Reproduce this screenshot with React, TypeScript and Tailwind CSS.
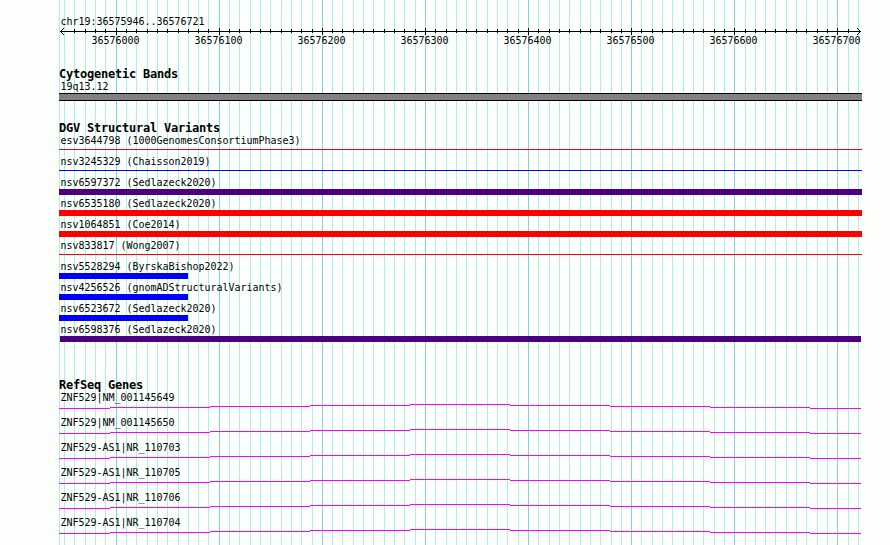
const START = 36575946;
const SCALE = 800 / 776;
const LEFT = 60;

const ticks = Array.from({ length: 78 }, (_, k) => {
  const pos = 36575950 + k * 10;
  return { pos, x: Math.round(LEFT + (pos - START) * SCALE), major: pos % 100 === 0 };
});

type Variant = { label: string; bar: string };

const variants: Variant[] = [
  { label: 'esv3644798 (1000GenomesConsortiumPhase3)', bar: 'mt-[2px] h-px w-[803px] bg-[#f00010]' },
  { label: 'nsv3245329 (Chaisson2019)', bar: 'mt-[2px] h-px w-[803px] bg-[#0000ff]' },
  { label: 'nsv6597372 (Sedlazeck2020)', bar: 'h-[6px] w-[803px] bg-[#4b0082]' },
  { label: 'nsv6535180 (Sedlazeck2020)', bar: 'h-[6px] w-[803px] bg-[#ff0000]' },
  { label: 'nsv1064851 (Coe2014)', bar: 'h-[6px] w-[803px] bg-[#ff0000]' },
  { label: 'nsv833817 (Wong2007)', bar: 'mt-[2px] h-px w-[803px] bg-[#ff0000]' },
  { label: 'nsv5528294 (ByrskaBishop2022)', bar: 'h-[6px] w-[129px] bg-[#0000ff]' },
  { label: 'nsv4256526 (gnomADStructuralVariants)', bar: 'h-[6px] w-[129px] bg-[#0000ff]' },
  { label: 'nsv6523672 (Sedlazeck2020)', bar: 'h-[6px] w-[129px] bg-[#0000ff]' },
  { label: 'nsv6598376 (Sedlazeck2020)', bar: 'ml-px h-[6px] w-[801px] bg-[#4b0082]' },
];

const genes = [
  'ZNF529|NM_001145649',
  'ZNF529|NM_001145650',
  'ZNF529-AS1|NR_110703',
  'ZNF529-AS1|NR_110705',
  'ZNF529-AS1|NR_110706',
  'ZNF529-AS1|NR_110704',
];

function Grid() {
  return (
    <svg className="absolute inset-0" width="890" height="545" shapeRendering="crispEdges">
      <rect x="59" y="0" width="1" height="545" fill="#afeeee" />
      {ticks.map((t) => (
        <rect key={t.pos} x={t.x} y="0" width="1" height="545" fill={t.major ? '#87ceeb' : '#afeeee'} />
      ))}
    </svg>
  );
}

function Ruler() {
  return (
    <svg className="block" width="890" height="19" shapeRendering="crispEdges">
      <rect x="60" y="3" width="801" height="1" />
      {ticks.slice(1, -1).map((t) => (
        <rect key={t.pos} x={t.x} y={t.major ? 0 : 1} width="1" height={t.major ? 7 : 4} />
      ))}
      {[1, 2, 3].map((d) => (
        <g key={d}>
          <rect x={60 + d} y={3 - d} width="1" height="1" />
          <rect x={60 + d} y={3 + d} width="1" height="1" />
          <rect x={860 - d} y={3 - d} width="1" height="1" />
          <rect x={860 - d} y={3 + d} width="1" height="1" />
        </g>
      ))}
      {ticks
        .filter((t) => t.major)
        .map((t) => (
          <text key={t.pos} x={t.x - 24.5} y="16">
            {t.pos}
          </text>
        ))}
    </svg>
  );
}

function Heading({ children }: { children: string }) {
  return (
    <h2 className="h-[14px] text-[12px] leading-[14px] font-bold tracking-[-0.224px] whitespace-pre">{children}</h2>
  );
}

function Label({ children }: { children: string }) {
  return <div className="ml-[1.5px] h-[12px] leading-[12px] whitespace-pre">{children}</div>;
}

export default function App() {
  return (
    <div className="relative h-[545px] w-[890px] overflow-hidden bg-[#fdfffc] font-['DejaVu_Sans_Mono',monospace] text-[10px] tracking-[-0.02px] text-black">
      <Grid />
      <main className="relative flex flex-col pt-[16px]">
        <div className="pl-[59px]">
          <Label>chr19:36575946..36576721</Label>
        </div>
        <Ruler />
        <section className="mt-[20px] pl-[59px]">
          <Heading>Cytogenetic Bands</Heading>
          <Label>19q13.12</Label>
          <div className="h-[8px] w-[803px] border-y border-black bg-[#838083]" />
        </section>
        <section className="mt-[20px] pl-[59px]">
          <Heading>DGV Structural Variants</Heading>
          {variants.map((v) => (
            <div key={v.label} className="flex h-[21px] flex-col">
              <Label>{v.label}</Label>
              <div className={v.bar} />
            </div>
          ))}
        </section>
        <section className="mt-[33px] pl-[59px]">
          <Heading>RefSeq Genes</Heading>
          {genes.map((g) => (
            <div key={g} className="h-[25px]">
              <Label>{g}</Label>
              <svg className="block" width="803" height="5" shapeRendering="crispEdges" fill="#ff00ff">
                <rect x="0" y="4" width="51" height="1" />
                <rect x="51" y="3" width="100" height="1" />
                <rect x="151" y="2" width="100" height="1" />
                <rect x="251" y="1" width="100" height="1" />
                <rect x="351" y="0" width="100" height="1" />
                <rect x="451" y="1" width="100" height="1" />
                <rect x="551" y="2" width="100" height="1" />
                <rect x="651" y="3" width="100" height="1" />
                <rect x="751" y="4" width="51" height="1" />
              </svg>
            </div>
          ))}
        </section>
      </main>
    </div>
  );
}
